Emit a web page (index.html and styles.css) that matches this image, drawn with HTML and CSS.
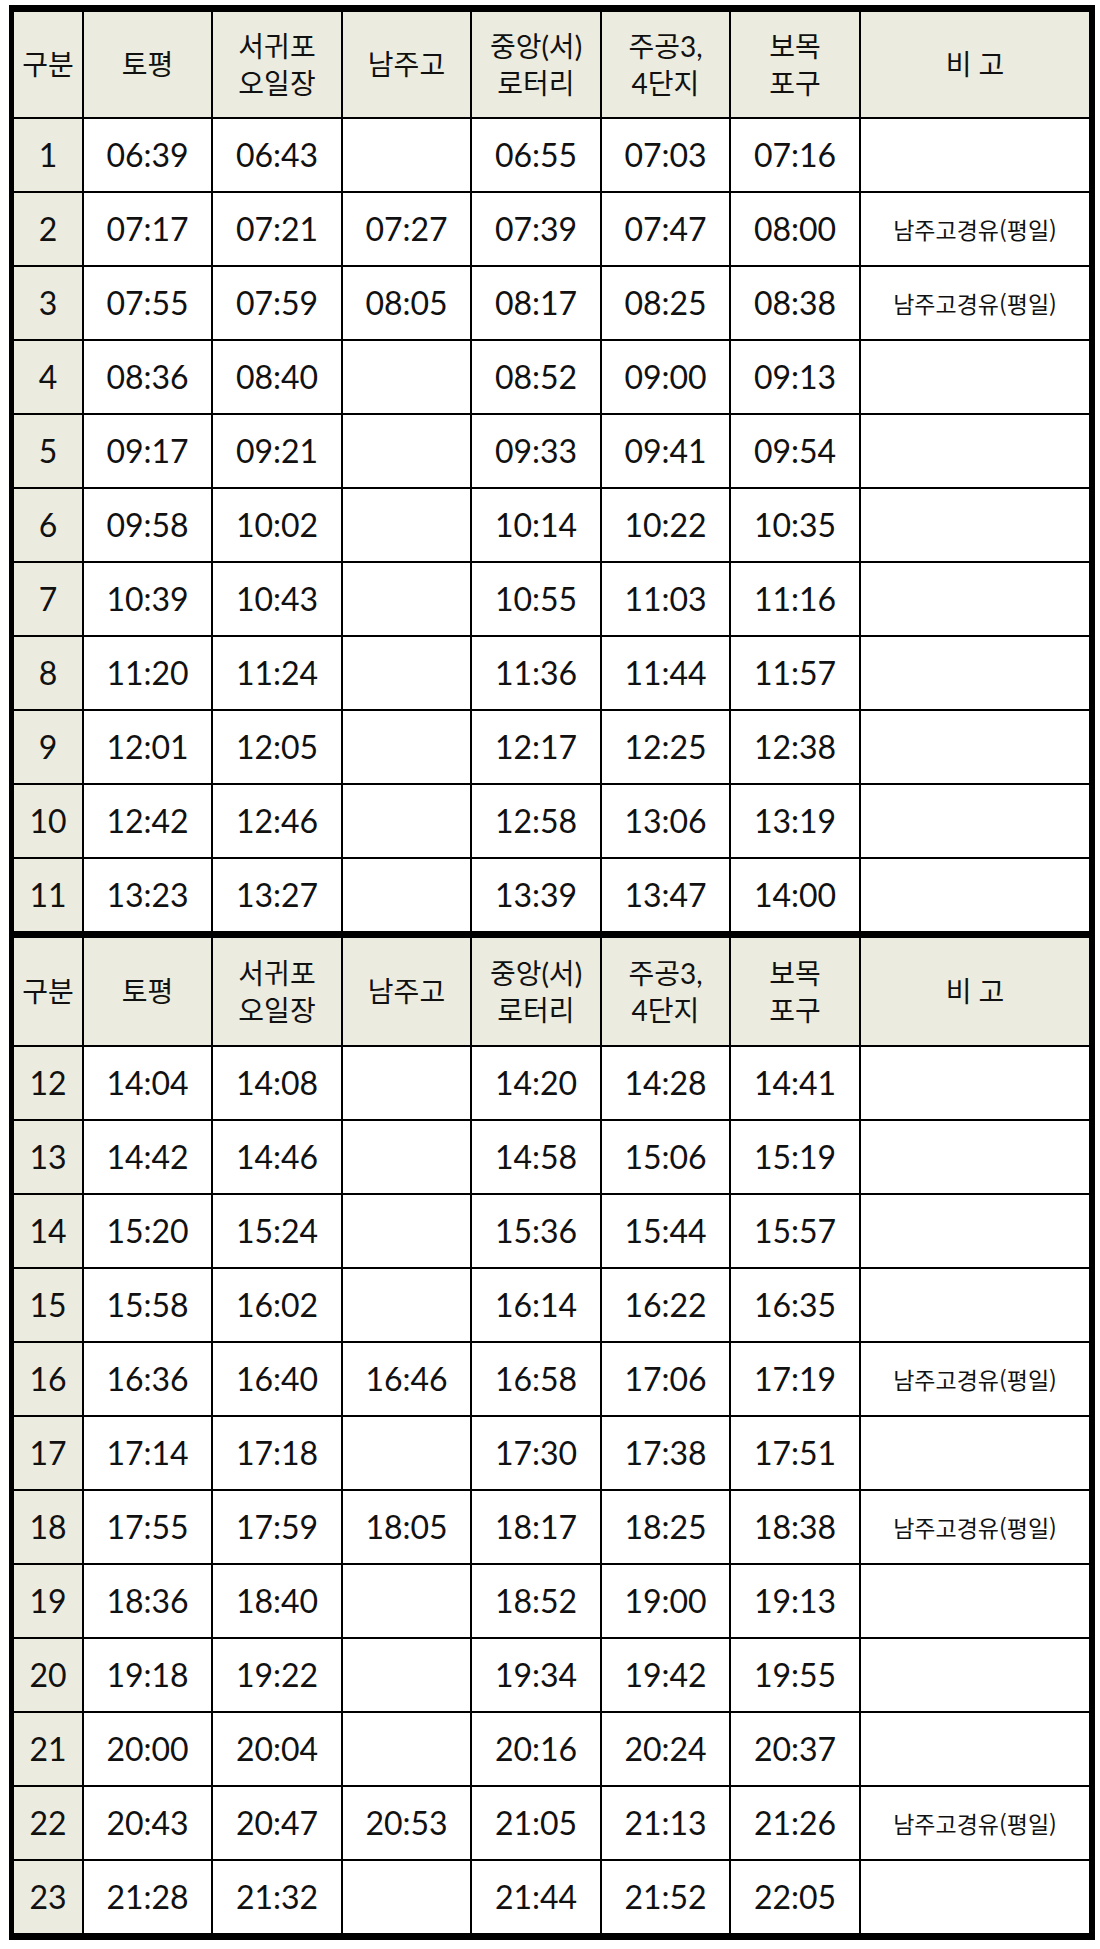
FILE: index.html
```html
<!DOCTYPE html>
<html lang="ko">
<head>
<meta charset="utf-8">
<title>시간표</title>
<link rel="stylesheet" href="styles.css">
</head>
<body>
<div class="frame">
  <div class="grid">
    <div class="c h">구분</div>
    <div class="c h">토평</div>
    <div class="c h">서귀포<br>오일장</div>
    <div class="c h">남주고</div>
    <div class="c h">중앙(서)<br>로터리</div>
    <div class="c h">주공3,<br>4단지</div>
    <div class="c h">보목<br>포구</div>
    <div class="c h">비 고</div>

    <div class="c n">1</div><div class="c">06:39</div><div class="c">06:43</div><div class="c"></div><div class="c">06:55</div><div class="c">07:03</div><div class="c">07:16</div><div class="c r"></div>
    <div class="c n">2</div><div class="c">07:17</div><div class="c">07:21</div><div class="c">07:27</div><div class="c">07:39</div><div class="c">07:47</div><div class="c">08:00</div><div class="c r">남주고경유(평일)</div>
    <div class="c n">3</div><div class="c">07:55</div><div class="c">07:59</div><div class="c">08:05</div><div class="c">08:17</div><div class="c">08:25</div><div class="c">08:38</div><div class="c r">남주고경유(평일)</div>
    <div class="c n">4</div><div class="c">08:36</div><div class="c">08:40</div><div class="c"></div><div class="c">08:52</div><div class="c">09:00</div><div class="c">09:13</div><div class="c r"></div>
    <div class="c n">5</div><div class="c">09:17</div><div class="c">09:21</div><div class="c"></div><div class="c">09:33</div><div class="c">09:41</div><div class="c">09:54</div><div class="c r"></div>
    <div class="c n">6</div><div class="c">09:58</div><div class="c">10:02</div><div class="c"></div><div class="c">10:14</div><div class="c">10:22</div><div class="c">10:35</div><div class="c r"></div>
    <div class="c n">7</div><div class="c">10:39</div><div class="c">10:43</div><div class="c"></div><div class="c">10:55</div><div class="c">11:03</div><div class="c">11:16</div><div class="c r"></div>
    <div class="c n">8</div><div class="c">11:20</div><div class="c">11:24</div><div class="c"></div><div class="c">11:36</div><div class="c">11:44</div><div class="c">11:57</div><div class="c r"></div>
    <div class="c n">9</div><div class="c">12:01</div><div class="c">12:05</div><div class="c"></div><div class="c">12:17</div><div class="c">12:25</div><div class="c">12:38</div><div class="c r"></div>
    <div class="c n">10</div><div class="c">12:42</div><div class="c">12:46</div><div class="c"></div><div class="c">12:58</div><div class="c">13:06</div><div class="c">13:19</div><div class="c r"></div>
    <div class="c n">11</div><div class="c">13:23</div><div class="c">13:27</div><div class="c"></div><div class="c">13:39</div><div class="c">13:47</div><div class="c">14:00</div><div class="c r"></div>
  </div>

  <div class="grid second">
    <div class="c h">구분</div>
    <div class="c h">토평</div>
    <div class="c h">서귀포<br>오일장</div>
    <div class="c h">남주고</div>
    <div class="c h">중앙(서)<br>로터리</div>
    <div class="c h">주공3,<br>4단지</div>
    <div class="c h">보목<br>포구</div>
    <div class="c h">비 고</div>

    <div class="c n">12</div><div class="c">14:04</div><div class="c">14:08</div><div class="c"></div><div class="c">14:20</div><div class="c">14:28</div><div class="c">14:41</div><div class="c r"></div>
    <div class="c n">13</div><div class="c">14:42</div><div class="c">14:46</div><div class="c"></div><div class="c">14:58</div><div class="c">15:06</div><div class="c">15:19</div><div class="c r"></div>
    <div class="c n">14</div><div class="c">15:20</div><div class="c">15:24</div><div class="c"></div><div class="c">15:36</div><div class="c">15:44</div><div class="c">15:57</div><div class="c r"></div>
    <div class="c n">15</div><div class="c">15:58</div><div class="c">16:02</div><div class="c"></div><div class="c">16:14</div><div class="c">16:22</div><div class="c">16:35</div><div class="c r"></div>
    <div class="c n">16</div><div class="c">16:36</div><div class="c">16:40</div><div class="c">16:46</div><div class="c">16:58</div><div class="c">17:06</div><div class="c">17:19</div><div class="c r">남주고경유(평일)</div>
    <div class="c n">17</div><div class="c">17:14</div><div class="c">17:18</div><div class="c"></div><div class="c">17:30</div><div class="c">17:38</div><div class="c">17:51</div><div class="c r"></div>
    <div class="c n">18</div><div class="c">17:55</div><div class="c">17:59</div><div class="c">18:05</div><div class="c">18:17</div><div class="c">18:25</div><div class="c">18:38</div><div class="c r">남주고경유(평일)</div>
    <div class="c n">19</div><div class="c">18:36</div><div class="c">18:40</div><div class="c"></div><div class="c">18:52</div><div class="c">19:00</div><div class="c">19:13</div><div class="c r"></div>
    <div class="c n">20</div><div class="c">19:18</div><div class="c">19:22</div><div class="c"></div><div class="c">19:34</div><div class="c">19:42</div><div class="c">19:55</div><div class="c r"></div>
    <div class="c n">21</div><div class="c">20:00</div><div class="c">20:04</div><div class="c"></div><div class="c">20:16</div><div class="c">20:24</div><div class="c">20:37</div><div class="c r"></div>
    <div class="c n">22</div><div class="c">20:43</div><div class="c">20:47</div><div class="c">20:53</div><div class="c">21:05</div><div class="c">21:13</div><div class="c">21:26</div><div class="c r">남주고경유(평일)</div>
    <div class="c n">23</div><div class="c">21:28</div><div class="c">21:32</div><div class="c"></div><div class="c">21:44</div><div class="c">21:52</div><div class="c">22:05</div><div class="c r"></div>
  </div>
</div>
</body>
</html>
```

FILE: styles.css
```css
html, body {
  margin: 0;
  background: #ffffff;
}

body {
  padding: 5px 0 0 9px;
  font-family: "Lato", "Noto Sans CJK KR", sans-serif;
  color: #111111;
}

.frame {
  box-sizing: border-box;
  width: 1086px;
  background: #000000;
  padding: 7px 6px 7px 5px;
  display: flex;
  flex-direction: column;
  gap: 7px;
}

.grid {
  display: grid;
  grid-template-columns: 68px 127px 128px 127px 128px 127px 128px 228px;
  grid-template-rows: 105px;
  grid-auto-rows: 72px;
  gap: 2px;
}

.grid.second {
  grid-template-rows: 107px;
}

.c {
  background: #ffffff;
  display: flex;
  align-items: center;
  justify-content: center;
  text-align: center;
  font-size: 32px;
  line-height: 1;
}

.h {
  background: #ebecdf;
  font-size: 28px;
  line-height: 37px;
}

.n {
  background: #ebecdf;
}

.r {
  font-family: "Noto Sans CJK KR", sans-serif;
  font-size: 23px;
}
```
